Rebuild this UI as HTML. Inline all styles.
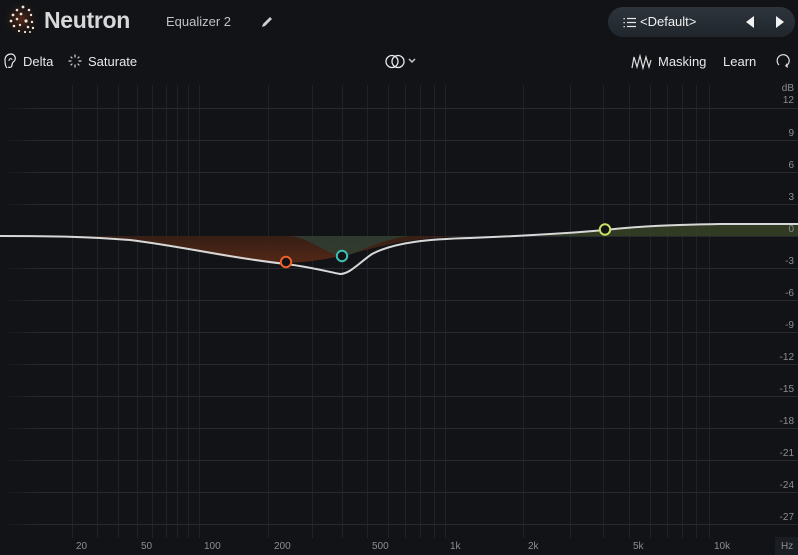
<!DOCTYPE html>
<html><head><meta charset="utf-8"><style>
*{margin:0;padding:0;box-sizing:border-box}
body{width:798px;height:555px;background:#111316;overflow:hidden;position:relative;font-family:"Liberation Sans",sans-serif;color:#e6e8ea}
.t{position:absolute;white-space:nowrap}
</style></head><body>
<svg width="798" height="555" style="position:absolute;left:0;top:0">
<defs>
<linearGradient id="hf" gradientUnits="userSpaceOnUse" x1="0" y1="0" x2="798" y2="0"><stop offset="0" stop-color="#262b31" stop-opacity="0"/><stop offset="0.05" stop-color="#262b31"/><stop offset="1" stop-color="#262b31"/></linearGradient>
<radialGradient id="lg" cx="0.5" cy="0.5" r="0.5"><stop offset="0" stop-color="#5a2a18"/><stop offset="1" stop-color="#111316" stop-opacity="0"/></radialGradient>
<linearGradient id="pill" x1="0" y1="0" x2="0" y2="1"><stop offset="0" stop-color="#2d343c"/><stop offset="1" stop-color="#20262c"/></linearGradient>
<linearGradient id="of" x1="0" y1="0" x2="0" y2="1"><stop offset="0" stop-color="#3a1f14"/><stop offset="1" stop-color="#5a2a16"/></linearGradient>
</defs>
<g stroke="#1f2327" stroke-width="1">
<line x1="72.5" y1="85" x2="72.5" y2="538"/><line x1="97.5" y1="85" x2="97.5" y2="538"/><line x1="118.5" y1="85" x2="118.5" y2="538"/><line x1="137.5" y1="85" x2="137.5" y2="538"/><line x1="152.5" y1="85" x2="152.5" y2="538"/><line x1="166.5" y1="85" x2="166.5" y2="538"/><line x1="177.5" y1="85" x2="177.5" y2="538"/><line x1="188.5" y1="85" x2="188.5" y2="538"/><line x1="199.5" y1="85" x2="199.5" y2="538"/><line x1="268.5" y1="85" x2="268.5" y2="538"/><line x1="312.5" y1="85" x2="312.5" y2="538"/><line x1="342.5" y1="85" x2="342.5" y2="538"/><line x1="367.5" y1="85" x2="367.5" y2="538"/><line x1="388.5" y1="85" x2="388.5" y2="538"/><line x1="405.5" y1="85" x2="405.5" y2="538"/><line x1="420.5" y1="85" x2="420.5" y2="538"/><line x1="434.5" y1="85" x2="434.5" y2="538"/><line x1="445.5" y1="85" x2="445.5" y2="538"/><line x1="523.5" y1="85" x2="523.5" y2="538"/><line x1="570.5" y1="85" x2="570.5" y2="538"/><line x1="603.5" y1="85" x2="603.5" y2="538"/><line x1="629.5" y1="85" x2="629.5" y2="538"/><line x1="650.5" y1="85" x2="650.5" y2="538"/><line x1="667.5" y1="85" x2="667.5" y2="538"/><line x1="682.5" y1="85" x2="682.5" y2="538"/><line x1="696.5" y1="85" x2="696.5" y2="538"/><line x1="709.5" y1="85" x2="709.5" y2="538"/>
</g>
<g stroke="url(#hf)" stroke-width="1">
<line x1="0" y1="108.5" x2="798" y2="108.5"/><line x1="0" y1="140.5" x2="798" y2="140.5"/><line x1="0" y1="172.5" x2="798" y2="172.5"/><line x1="0" y1="204.5" x2="798" y2="204.5"/><line x1="0" y1="236.5" x2="798" y2="236.5"/><line x1="0" y1="268.5" x2="798" y2="268.5"/><line x1="0" y1="300.5" x2="798" y2="300.5"/><line x1="0" y1="332.5" x2="798" y2="332.5"/><line x1="0" y1="364.5" x2="798" y2="364.5"/><line x1="0" y1="396.5" x2="798" y2="396.5"/><line x1="0" y1="428.5" x2="798" y2="428.5"/><line x1="0" y1="460.5" x2="798" y2="460.5"/><line x1="0" y1="492.5" x2="798" y2="492.5"/><line x1="0" y1="524.5" x2="798" y2="524.5"/>
</g>
<path d="M80 236 C160 238 220 262 286 263 C330 262 360 250 400 242 C430 238 450 236 470 236 Z" fill="url(#of)" opacity="0.9"/>
<path d="M290 236 C310 238 330 256 342 256 C355 256 375 240 410 236 Z" fill="#2f3e33" opacity="0.85"/>
<path d="M540 236 C570 234 590 232 605 230 C650 226 690 224 798 224 L798 236 Z" fill="#3a4527" opacity="0.8"/>
<path d="M0 236 C60 236 90 237 130 240 C180 246 230 258 286 264 C310 267 325 271 340 274 C350 274 360 262 372 254 C395 242 430 239 470 238 C520 236 560 234 605 230 C640 226 670 225 720 224 L798 224" fill="none" stroke="#d8d8d8" stroke-width="2"/>
<circle cx="286" cy="262" r="5.2" fill="#111316" stroke="#f0602a" stroke-width="2"/>
<circle cx="342" cy="256" r="5.2" fill="#111316" stroke="#3ec1b2" stroke-width="2"/>
<circle cx="605" cy="229.5" r="5.2" fill="#111316" stroke="#c9e060" stroke-width="2"/>
<circle cx="21" cy="19" r="20" fill="url(#lg)"/>
<g fill="#f4e4da">
<circle cx="23" cy="7" r="1.4"/><circle cx="29" cy="10" r="1.3"/><circle cx="17" cy="10" r="1.3"/><circle cx="13" cy="15" r="1.4"/><circle cx="21" cy="14" r="1.4"/><circle cx="31" cy="15" r="1.2"/><circle cx="11" cy="21" r="1.4"/><circle cx="17" cy="19" r="1.3"/><circle cx="26" cy="21" r="1.6"/><circle cx="32" cy="22" r="1.2"/><circle cx="14" cy="26" r="1.3"/><circle cx="20" cy="25" r="1.2"/><circle cx="28" cy="27" r="1.3"/><circle cx="33" cy="28" r="1.2"/><circle cx="19" cy="31" r="1.1"/><circle cx="25" cy="32" r="1.1"/><circle cx="30" cy="32" r="1"/>
</g>
<rect x="608" y="7" width="187" height="30" rx="15" fill="url(#pill)"/>
<g stroke="#e8e8e8" stroke-width="1.2"><line x1="627" y1="18.5" x2="636" y2="18.5"/><line x1="627" y1="22.5" x2="636" y2="22.5"/><line x1="627" y1="26.5" x2="636" y2="26.5"/></g>
<g fill="#e8e8e8"><rect x="623.5" y="18" width="1.3" height="1.3"/><rect x="623.5" y="22" width="1.3" height="1.3"/><rect x="623.5" y="26" width="1.3" height="1.3"/></g>
<path d="M754 16 L754 28 L746 22 Z" fill="#f2f2f2"/><path d="M776 16 L776 28 L784 22 Z" fill="#f2f2f2"/>
<path d="M262 27 L263 24 L270 17 L272 19 L265 26 Z" fill="#cfcfcf"/>
<path d="M7 68 C5 66 5 62 5 60 C5 56 8 54 11 54 C14 54 16 57 15 60 C14 62 12 62 12 65 C12 67 10 68 8 67" fill="none" stroke="#e6e8ea" stroke-width="1.2"/>
<path d="M9 61 C9 58 12 58 12 60" fill="none" stroke="#e6e8ea" stroke-width="1"/>
<g stroke="#d8d8d8" stroke-width="1.2" stroke-linecap="round">
<line x1="75" y1="55" x2="75" y2="57"/><line x1="75" y1="65" x2="75" y2="67"/><line x1="69" y1="61" x2="71" y2="61"/><line x1="79" y1="61" x2="81" y2="61"/><line x1="71" y1="57" x2="72" y2="58"/><line x1="78" y1="64" x2="79" y2="65"/><line x1="79" y1="57" x2="78" y2="58"/><line x1="72" y1="64" x2="71" y2="65"/>
</g>
<circle cx="392" cy="61.5" r="6" fill="none" stroke="#e6e8ea" stroke-width="1.3"/><circle cx="398" cy="61.5" r="6" fill="none" stroke="#e6e8ea" stroke-width="1.3"/>
<path d="M409 59 L412 62 L415 59" fill="none" stroke="#c8c8c8" stroke-width="1.5"/>
<path d="M632 68 L634 57 L637 67 L640 56 L643 68 L646 57 L649 67 L651 60" fill="none" stroke="#e0e0e0" stroke-width="1.2"/>
<path d="M786 66 A6 6 0 1 0 779 65" fill="none" stroke="#e0e0e0" stroke-width="1.2"/><path d="M785 66 L788 68 L787 63 Z" fill="#e0e0e0"/>
<rect x="775" y="537" width="23" height="18" fill="#1a1d21"/>
</svg>
<div class="t" style="left:44px;top:7px;font-size:23px;font-weight:bold;color:#d6d8da;letter-spacing:-0.3px">Neutron</div>
<div class="t" style="left:166px;top:14px;font-size:13px;color:#bfc2c5">Equalizer 2</div>
<div class="t" style="left:640px;top:14px;font-size:13px;color:#f0f0f0">&lt;Default&gt;</div>
<div class="t" style="left:23px;top:54px;font-size:13px">Delta</div>
<div class="t" style="left:88px;top:54px;font-size:13px">Saturate</div>
<div class="t" style="left:658px;top:54px;font-size:13px">Masking</div>
<div class="t" style="left:723px;top:54px;font-size:13px">Learn</div>
<div style="position:absolute;right:4px;top:83px;font-size:10px;color:#8a8e93;text-align:right;line-height:32px;width:30px">
<div style="line-height:12px">dB</div>
<div style="line-height:12px;margin-bottom:20px">12</div>
<div style="margin-top:-9px">9</div><div>6</div><div>3</div><div>0</div><div>-3</div><div>-6</div><div>-9</div><div>-12</div><div>-15</div><div>-18</div><div>-21</div><div>-24</div><div>-27</div>
</div>
<div style="font-size:10px;color:#8a8e93">
<div class="t" style="left:76px;top:541px">20</div><div class="t" style="left:141px;top:541px">50</div><div class="t" style="left:204px;top:541px">100</div><div class="t" style="left:274px;top:541px">200</div><div class="t" style="left:372px;top:541px">500</div><div class="t" style="left:450px;top:541px">1k</div><div class="t" style="left:528px;top:541px">2k</div><div class="t" style="left:633px;top:541px">5k</div><div class="t" style="left:714px;top:541px">10k</div><div class="t" style="left:781px;top:541px">Hz</div>
</div>
</body></html>
